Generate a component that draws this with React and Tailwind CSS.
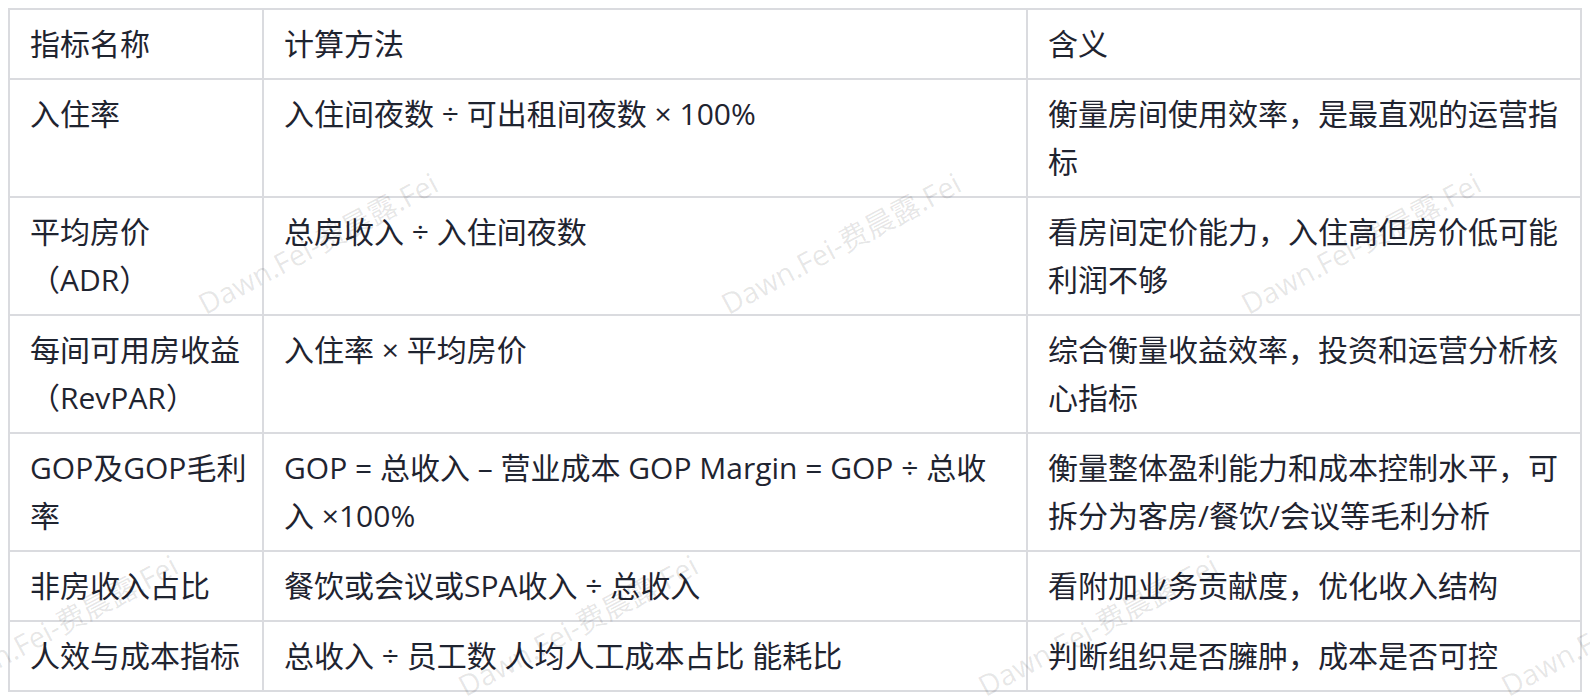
const rows = [
  ["入住率", "入住间夜数 ÷ 可出租间夜数 × 100%", "衡量房间使用效率，是最直观的运营指标"],
  ["平均房价（ADR）", "总房收入 ÷ 入住间夜数", "看房间定价能力，入住高但房价低可能利润不够"],
  ["每间可用房收益（RevPAR）", "入住率 × 平均房价", "综合衡量收益效率，投资和运营分析核心指标"],
  ["GOP及GOP毛利率", "GOP = 总收入 – 营业成本 GOP Margin = GOP ÷ 总收入 ×100%", "衡量整体盈利能力和成本控制水平，可拆分为客房/餐饮/会议等毛利分析"],
  ["非房收入占比", "餐饮或会议或SPA收入 ÷ 总收入", "看附加业务贡献度，优化收入结构"],
  ["人效与成本指标", "总收入 ÷ 员工数 人均人工成本占比 能耗比", "判断组织是否臃肿，成本是否可控"],
];

const marks = [
  "left-[207px] top-[289px]",
  "left-[730px] top-[289px]",
  "left-[1250px] top-[289px]",
  "left-[-53px] top-[671px]",
  "left-[467px] top-[671px]",
  "left-[987px] top-[671px]",
  "left-[1510px] top-[671px]",
];

const base = "border-2 border-[#dadbdf] py-2.5 align-top text-left font-normal break-words";
const cells = [`${base} pl-5 pr-3`, `${base} px-5`, `${base} px-5`];

export default function App() {
  return (
    <div className="relative h-[700px] overflow-hidden bg-white p-2 font-['Open_Sans','Noto_Sans_CJK_SC',sans-serif]">
      <table className="w-full table-fixed border-collapse text-[30px] leading-[48px] text-[#1f2430]">
        <colgroup>
          <col className="w-[254px]" />
          <col className="w-[764px]" />
          <col />
        </colgroup>
        <thead>
          <tr>
            <th className={cells[0]}>指标名称</th>
            <th className={cells[1]}>计算方法</th>
            <th className={cells[2]}>含义</th>
          </tr>
        </thead>
        <tbody>
          {rows.map((r, i) => (
            <tr key={i}>
              {r.map((c, j) => (
                <td key={j} className={cells[j]}>{c}</td>
              ))}
            </tr>
          ))}
        </tbody>
      </table>
      {marks.map((m, i) => (
        <span
          key={i}
          className={`pointer-events-none absolute ${m} origin-bottom-left -rotate-[28deg] whitespace-nowrap text-[29px] leading-[29px] text-black/10`}
        >
          Dawn.Fei-费晨露.Fei
        </span>
      ))}
    </div>
  );
}
